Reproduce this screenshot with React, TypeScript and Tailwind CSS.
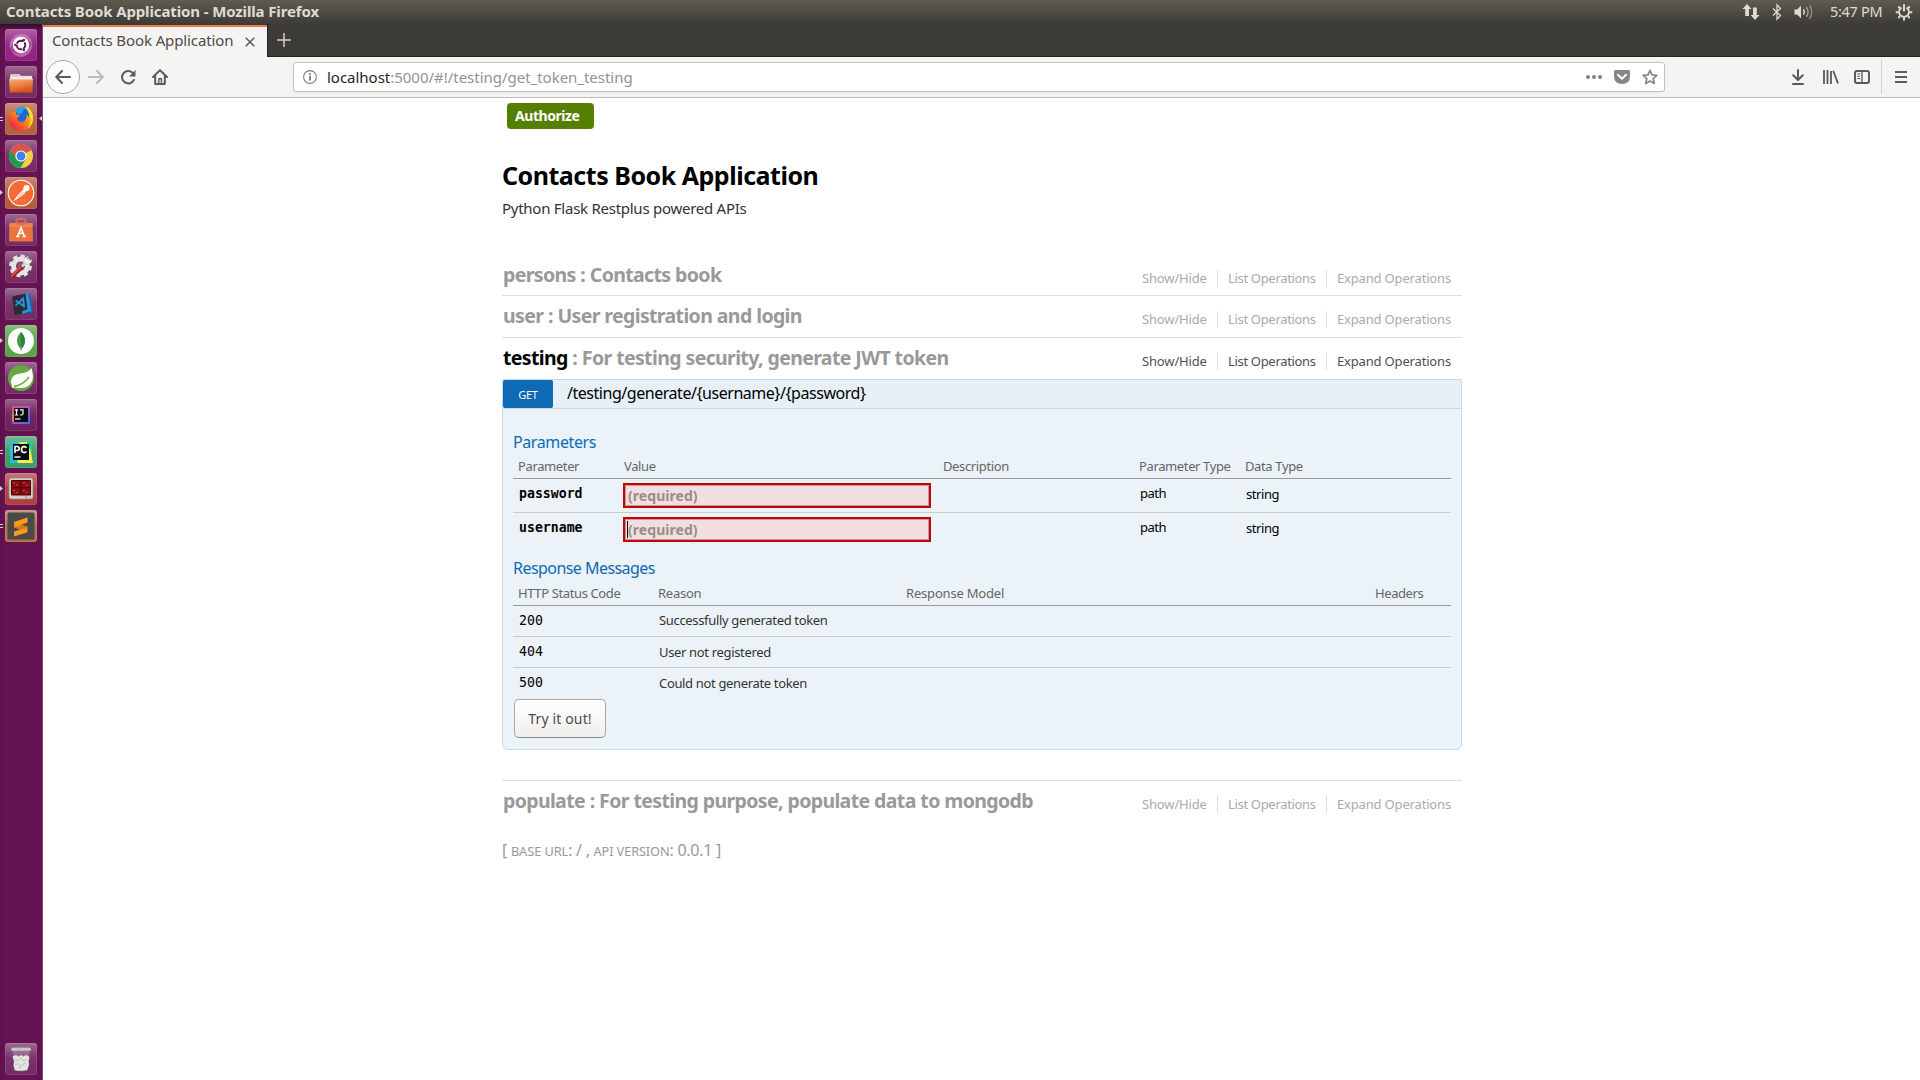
import type { ReactNode } from "react";

/* ---------- launcher ---------- */

function Svg({ children }: { children: ReactNode }) {
  return (
    <svg viewBox="0 0 32 32" className="block h-8 w-8">
      {children}
    </svg>
  );
}

const icons: Record<string, ReactNode> = {
  dash: (
    <Svg>
      <circle cx="16" cy="16" r="11.5" fill="#b565a5" opacity=".45" />
      <path d="M5 20a12 12 0 0 1 12-15c6 0 10 5 10 10-3-5-8-7-12-6-5 1-8 5-10 11z" fill="#d9a3cf" opacity=".45" />
      <path d="M27 14a12 12 0 0 1-11 14c-5 0-8-3-9-6 4 3 8 3 12 1s7-5 8-9z" fill="#d9a3cf" opacity=".35" />
      <circle cx="16" cy="16" r="8.2" fill="#fff" />
      <circle cx="16" cy="16" r="4.3" fill="none" stroke="#5c1650" strokeWidth="1.9" strokeDasharray="7.8 1.2" strokeDashoffset="3.4" />
      <circle cx="10.4" cy="16" r="1.3" fill="#5c1650" />
      <circle cx="18.8" cy="11.1" r="1.3" fill="#5c1650" />
      <circle cx="18.8" cy="20.9" r="1.3" fill="#5c1650" />
    </Svg>
  ),
  files: (
    <Svg>
      <path d="M5 9.5q0-1.500 1.500-1.500h8l1.500 1.800h10q1.200 0 1.200 1.200v4H5z" fill="#d9c6c9" />
      <path d="M5.500 10.500h21.500v5H5.500z" fill="#f3e9e6" />
      <path d="M4 13h24l-.6 13.500H4.800z" fill="url(#folder)" />
      <path d="M4 13h24l-.1 1H4z" fill="#fbb98c" />
      <defs>
        <linearGradient id="folder" x1="0" y1="0" x2="0.300" y2="1">
          <stop offset="0" stopColor="#f5b083" />
          <stop offset=".6" stopColor="#ea7a3a" />
          <stop offset="1" stopColor="#d8521a" />
        </linearGradient>
      </defs>
    </Svg>
  ),
  firefox: (
    <Svg>
      <defs>
        <linearGradient id="fx" x1=".9" y1=".1" x2=".2" y2=".9">
          <stop offset="0" stopColor="#ffe226" />
          <stop offset=".4" stopColor="#ff9a1e" />
          <stop offset="1" stopColor="#f0263e" />
        </linearGradient>
      </defs>
      <circle cx="16.500" cy="14" r="9" fill="#1b68d8" />
      <path d="M11 6.500c3-3 8-3 10.500-1-3 .5-4 2-3.500 4-2 .5-4 1.500-4.500 3z" fill="#22a5f0" />
      <path d="M5.500 7.500c.5 1 1.200 1.600 2 2C9 8.300 10.500 8 12 8.500c-1 1-1.200 2-.8 3 1.500.2 2.800.4 3.600 1.200-.8 1.300-2.600 1.500-2.800 3 .6 2.500 4 3.800 6.500 2.600 3-1.300 3.600-4 2.900-6.700 1.600.8 2.400 2 2.600 3.400.7-4-.5-8-3.500-11.500C26 5.500 28.500 11 28 16.500 27.500 23 22.500 28 16 28S4 23 4 16.500c0-3.300.4-6.300 1.500-9z" fill="url(#fx)" />
      <path d="M20.500 3.500c5 2 7.900 7 7.500 13-.3 4-2.500 7.500-5.500 9.500 2.500-4 3.300-8 2.500-12-.7-4-2.500-7-4.500-10.500z" fill="#ffdd2a" opacity=".85" />
      <path d="M12 15.700c.6 2.500 4 3.800 6.500 2.600 1-.4 1.700-1 2.200-1.800-.4 3-2.700 4.700-5.200 4.300-2.300-.4-3.700-2.500-3.500-5.100z" fill="#e8482a" opacity=".6" />
    </Svg>
  ),
  chrome: (
    <Svg>
      <circle cx="16" cy="16" r="12" fill="#f9cb4b" />
      <path d="M16 16 5.600 10A12 12 0 0 1 26.400 10z" fill="#d8564a" />
      <path d="M16 10.500H26.700A12 12 0 0 0 5.600 10L11 19z" fill="#d8564a" />
      <path d="M11.300 18.700 5.600 10A12 12 0 0 0 15.500 28l5.300-9.300z" fill="#1f9b56" />
      <circle cx="16" cy="16" r="5.600" fill="#fff" />
      <circle cx="16" cy="16" r="4.500" fill="#3f82f0" />
    </Svg>
  ),
  postman: (
    <Svg>
      <circle cx="16" cy="16" r="12.800" fill="#f8693a" stroke="#fff" strokeWidth="1.100" />
      <path d="M8 24.500 12.800 18l4.500-4.600 3 2.600-4.600 3.800z" fill="#fff" />
      <path d="M12.500 20.500 19 14.500" stroke="#f8693a" strokeWidth=".7" />
      <circle cx="21.500" cy="11" r="3.100" fill="#fff" />
      <path d="m17 14 2-2.500 2.500 2.500-2.400 2z" fill="#fff" />
    </Svg>
  ),
  software: (
    <Svg>
      <path d="M11.500 10V6.200q0-1.200 1.200-1.200h6.600q1.200 0 1.200 1.200V10" fill="none" stroke="#d96a4a" strokeWidth="1.900" />
      <path d="M4.500 9h23l.5 18.500H4z" fill="#e9753c" />
      <path d="M4.500 9h23v4h-23z" fill="#ef8456" />
      <path d="M11.500 8h9v3h-9z" fill="#d96a4a" opacity=".8" />
      <path d="M12.500 22.500 16 14l3.500 8.500M11 22.500h3.300M17.700 22.500H21M13.800 19.500h4.600" fill="none" stroke="#fff" strokeWidth="1.700" />
    </Svg>
  ),
  settings: (
    <Svg>
      <circle cx="15.500" cy="15" r="9.700" fill="none" stroke="#e2e2e2" strokeWidth="3.400" strokeDasharray="4.100 3.500" />
      <circle cx="15.500" cy="15" r="7" fill="none" stroke="#e4e4e4" strokeWidth="5" />
      <circle cx="15.500" cy="15" r="3.200" fill="#8b5a80" />
      <path d="M6.500 26 17.500 15.500" stroke="#a3232b" strokeWidth="4" strokeLinecap="round" />
      <path d="M6.500 25 16 16" stroke="#dc5a58" strokeWidth="1.200" strokeLinecap="round" />
      <path d="m17 15.500 3.500-3.500" stroke="#d4d4d4" strokeWidth="3" />
      <path d="M19 11c-.5-3 1.500-5.500 4.500-5.500L22 8l2 2 3-1.500c0 3-2.500 5-5.500 4.700z" fill="#f2f2f2" stroke="#aaa" strokeWidth=".4" />
    </Svg>
  ),
  vscode: (
    <Svg>
      <path d="m7 8.500 14-3L24 25 9.500 27z" fill="#2c2c33" />
      <path d="m20.500 5 4.500 1 3 17-4 2.800z" fill="#1668b0" />
      <path d="m20.500 5 2.500-.5 3.200 18.500-8.700 3.300-.5-3 5.500-2z" fill="#2b93e0" />
      <path d="m10.800 12.500 7.700 5.500M10.600 17.600l7.400-7.100 1.200 8.800" fill="none" stroke="#2b94e0" strokeWidth="1.900" />
    </Svg>
  ),
  mongo: (
    <Svg>
      <circle cx="16" cy="16" r="13" fill="#fff" />
      <path d="M16 7c5 5 5.500 12 0 17.500C10.500 19 11 12 16 7z" fill="#479a44" />
      <path d="M16 7c5 5 5.500 12 0 17.500z" fill="#357f3c" />
      <path d="M16 21v5" stroke="#8a9a80" strokeWidth=".8" />
    </Svg>
  ),
  spring: (
    <Svg>
      <circle cx="16" cy="16" r="13" fill="#65aa41" />
      <path d="M26.500 6c1.800 6.500 2.300 12-1.500 16.500-3.500 4-10 4-17 2.500-3-4-2.500-9.500 2-12 5.500-2.800 12.500-.5 16.500-7z" fill="#fff" />
      <path d="M8.500 24.500c6-.8 11-3.500 15.500-9.500" fill="none" stroke="#65aa41" strokeWidth="1.400" />
      <circle cx="8" cy="24.700" r="1.200" fill="#fff" />
    </Svg>
  ),
  intellij: (
    <Svg>
      <defs>
        <linearGradient id="ij" x1="0" y1="0" x2="1" y2="1">
          <stop offset="0" stopColor="#f0467e" />
          <stop offset=".5" stopColor="#a25bd0" />
          <stop offset="1" stopColor="#2a72e8" />
        </linearGradient>
      </defs>
      <path d="M7 7h18v18H7z" fill="url(#ij)" />
      <path d="M7 14h4v8H7z" fill="#e5813c" />
      <path d="M7 22h6v3H7z" fill="#a24fc4" />
      <path d="M9 9h14v14H9z" fill="#0b0b0f" />
      <path d="M9.800 10.800h3.400M11.500 10.800v5M9.800 16h3.400M15 10.800h3v4q0 1.200-1.400 1.200H15" fill="none" stroke="#fff" strokeWidth="1.200" />
      <path d="M10 20h5.500" stroke="#fff" strokeWidth="1.200" />
    </Svg>
  ),
  pycharm: (
    <Svg>
      <path d="M5 6h22v21H5z" fill="#1fcf86" />
      <path d="M14 6h8v9L14 12z" fill="#d8ec4a" />
      <path d="m5 6 9-.5L10 20l-5 2z" fill="#27c3e0" />
      <path d="m9 27 16-15 3 15z" fill="#f2ee4d" />
      <path d="M5 20h6l2 7H5z" fill="#22c3c8" />
      <path d="M8 8h16v16H8z" fill="#0b0b0f" />
      <path d="M10 17v-6.500h2.200q2 0 2 2t-2 2H10M21.500 11.800q-1-1.200-2.500-1.200-2.500 0-2.500 3t2.500 3q1.500 0 2.500-1.200" fill="none" stroke="#fff" strokeWidth="1.600" />
      <path d="M9.500 21h6" stroke="#fff" strokeWidth="1.400" />
    </Svg>
  ),
  terminator: (
    <Svg>
      <rect x="4" y="5" width="24" height="21" rx="2.500" fill="#cfcfca" stroke="#8a8a86" strokeWidth=".6" />
      <rect x="6" y="7" width="20" height="15.500" rx="1" fill="#4a0606" />
      <path d="M7 8h8.500v6H7zM16.500 8H25v6h-8.500zM7 15.200h8.500v6.300H7zM16.500 15.200H25v6.300h-8.500z" fill="#8e0b10" />
      <path d="M8 10h2M17.800 10h2M8 17.500h2M17.800 17.500h2M11 12h1.500M21 12h1.500M11 19.500h1.500M21 19.500h1.500" stroke="#e06a6a" strokeWidth=".8" />
      <circle cx="21" cy="24.200" r=".8" fill="#e04040" />
    </Svg>
  ),
  sublime: (
    <Svg>
      <rect x="2.500" y="2.500" width="27" height="27" rx="1.500" fill="#4a4a4a" />
      <path d="m9 12 13.500-4.500v5L16 14.700l6.500 2v5.500L9 26.500v-5l6.500-2L9 17.200z" fill="#f99a1c" />
      <path d="m9 17.200 6.500-2.200 7 1.700v1.500l-7 1.300z" fill="#d87a10" />
    </Svg>
  ),
  trash: (
    <Svg>
      <path d="m7.500 7 1.500 20.500q7 1.500 14 0L24.500 7z" fill="#a387a0" opacity=".6" />
      <rect x="6" y="4.500" width="20" height="3.500" rx="1.700" fill="#c8c8c4" stroke="#8d8d88" strokeWidth=".6" />
      <path d="M7.500 13.500 11 12l2.500 1.500L16 12l2 1.500 3.500-1.500 3 2-1 4 .5 4-2 5q-6 1.500-12 .2L8.500 22l.8-3.500z" fill="#e4e4e2" />
      <path d="m10 16 3 2 3-3 3 3 3-2M10 22l3-1.500 3 2.500 4-3 2 2M14 26l2-3" fill="none" stroke="#b9b9b6" strokeWidth=".8" />
    </Svg>
  ),
};

const launcher: { id: string; bg: string; left?: 1 | 2; right?: boolean }[] = [
  { id: "dash", bg: "bg-[#8f2280]" },
  { id: "files", bg: "bg-[#742b64]" },
  { id: "firefox", bg: "bg-[#b0623c]", left: 2, right: true },
  { id: "chrome", bg: "bg-[#742b64]" },
  { id: "postman", bg: "bg-[#b35a38]", left: 1 },
  { id: "software", bg: "bg-[#742b64]" },
  { id: "settings", bg: "bg-[#742b64]" },
  { id: "vscode", bg: "bg-[#742b64]" },
  { id: "mongo", bg: "bg-[#55a544]", left: 1 },
  { id: "spring", bg: "bg-[#742b64]" },
  { id: "intellij", bg: "bg-[#6c1f5b]" },
  { id: "pycharm", bg: "bg-[#3e9e68]", left: 2 },
  { id: "terminator", bg: "bg-[#b03c40]", left: 1 },
  { id: "sublime", bg: "bg-[#b0703c]", left: 2 },
];

function Tile({ id, bg, left, right }: { id: string; bg: string; left?: 1 | 2; right?: boolean }) {
  return (
    <div className="relative h-8 w-full pl-[5px]">
      <div className={`h-8 w-8 rounded-[3px] ${bg} shadow-[inset_0_0_0_1px_rgba(255,255,255,0.1)]`}>
        <div className="h-8 w-8 rounded-[3px] bg-linear-to-b from-white/30 via-white/5 via-45% to-transparent">{icons[id]}</div>
      </div>
      {left === 1 && <span className="absolute top-[13px] left-0 h-[5px] w-[3px] bg-[#d9cdd6] [clip-path:polygon(0_0,100%_50%,0_100%)]" />}
      {left === 2 && <span className="absolute top-[14px] left-0 h-1 w-[3px] border-y border-[#d9cdd6]" />}
      {right && <span className="absolute top-[13px] right-0 h-[5px] w-[3px] bg-[#d9cdd6] [clip-path:polygon(100%_0,0_50%,100%_100%)]" />}
    </div>
  );
}

function Launcher() {
  return (
    <aside className="flex w-[43px] flex-none flex-col gap-[5px] border-r border-[#84487a] bg-[#641251] pt-[5px] pb-[5px] shadow-[inset_0_6px_5px_-3px_rgba(0,0,0,0.5)]">
      {launcher.map((item) => (
        <Tile key={item.id} {...item} />
      ))}
      <div className="mt-auto">
        <Tile id="trash" bg="bg-[#742b64]" />
      </div>
    </aside>
  );
}

/* ---------- system bar and browser chrome ---------- */

function SystemBar() {
  return (
    <div className="flex h-6 items-center bg-linear-to-b from-[#5e5b50] to-[#3d3c37] pr-[7px] pl-[6px] text-[15px] text-[#dfdbd2]">
      <span className="pb-[2px] leading-[22px] font-bold tracking-[-0.123px]">Contacts Book Application - Mozilla Firefox</span>
      <svg viewBox="0 0 18 18" className="ml-auto h-[18px] w-[18px] flex-none" fill="#dfdbd2">
        <path d="M5 1 9.500 6H7v7H3.200V6H.5zM13 17l-4.500-5H11V4.500h3.800V12h2.700z" />
      </svg>
      <svg viewBox="0 0 12 18" className="ml-[11px] h-[18px] w-3 flex-none" fill="none" stroke="#dfdbd2" strokeWidth="1.300">
        <path d="m2 5.500 7.500 7L6 16.200V1.800l3.500 3.700-7.500 7" />
      </svg>
      <svg viewBox="0 0 20 18" className="ml-[11px] h-[18px] w-5 flex-none">
        <path d="M.5 6.500H3l4-3.800v12.600L3 11.500H.5z" fill="#dfdbd2" />
        <path d="M9.500 6.300q1.600 2.700 0 5.400" fill="none" stroke="#dfdbd2" strokeWidth="1.500" />
        <path d="M12.500 4.200q3 4.800 0 9.600" fill="none" stroke="#a09d95" strokeWidth="1.500" />
        <path d="M15.500 2q4.500 7 0 14" fill="none" stroke="#8a877f" strokeWidth="1.500" />
      </svg>
      <span className="ml-4 w-[52px] text-[14.500px] tracking-[-0.300px] whitespace-nowrap">5:47 PM</span>
      <svg viewBox="0 0 18 18" className="ml-[13px] h-[18px] w-[18px] flex-none" fill="none" stroke="#dfdbd2">
        <path d="M6.500 4.600a5 5 0 1 0 5 0" strokeWidth="1.800" />
        <path d="M9 1.200v7" strokeWidth="2" />
        <path d="M3.300 3.500 5 5.200M14.700 3.500 13 5.200M.7 9.200h2.500M17.300 9.200h-2.500M3.300 15l1.600-1.700M14.700 15l-1.600-1.700M9 17.500v-3" strokeWidth="2" />
      </svg>
    </div>
  );
}

function TabStrip() {
  return (
    <div className="flex h-[33px] flex-none bg-[#3c3b37]">
      <div className="mt-px flex h-8 w-[224px] items-center border-t-2 border-[#f07746] bg-[#f5f4f2] pr-3 pl-[9px]">
        <span className="pb-1 text-[15px] leading-6 tracking-[-0.110px] whitespace-nowrap text-[#4c4c4c]">Contacts Book Application</span>
        <svg viewBox="0 0 10 10" className="mb-px ml-auto h-[10px] w-[10px]" stroke="#5a5a58" strokeWidth="1.500">
          <path d="m.7.7 8.600 8.600M9.300.7.7 9.300" />
        </svg>
      </div>
      <div className="flex flex-1 items-center border-b border-l border-[#24231f] pl-[9px]">
        <svg viewBox="0 0 14 14" className="h-[14px] w-[14px]" stroke="#d5d1c8" strokeWidth="1.500">
          <path d="M7 0v14M0 7h14" />
        </svg>
      </div>
    </div>
  );
}

function Toolbar() {
  return (
    <div className="flex h-[41px] flex-none items-center border-b border-[#bdbcba] bg-[#f5f4f2] pl-[3px]">
      <div className="flex h-[34px] w-[34px] items-center justify-center rounded-full border border-[#a9a8a6] bg-[#fcfcfc]">
        <svg viewBox="0 0 16 16" className="h-4 w-4" fill="none" stroke="#5b5a59" strokeWidth="2" strokeLinecap="round" strokeLinejoin="round">
          <path d="M15 8H1.500M7 2 1.200 8 7 14" />
        </svg>
      </div>
      <svg viewBox="0 0 16 16" className="ml-2 h-4 w-4" fill="none" stroke="#bcbbb9" strokeWidth="2" strokeLinecap="round" strokeLinejoin="round">
        <path d="M1 8h13.500M9 2l5.800 6L9 14" />
      </svg>
      <svg viewBox="0 0 16 16" className="ml-4 h-4 w-4" fill="none" stroke="#5b5a59" strokeWidth="2" strokeLinecap="round">
        <path d="M13.800 11A6.200 6.200 0 1 1 12.500 3.700" />
        <path d="M15.500 1v6.500H9z" fill="#5b5a59" stroke="none" />
      </svg>
      <svg viewBox="0 0 16 16" className="ml-4 h-4 w-4" fill="none" stroke="#5b5a59" strokeWidth="2" strokeLinecap="round" strokeLinejoin="round">
        <path d="M1 8 8 1.200 15 8M3.200 7v8h9.600V7" />
        <path d="M6.800 14.500V9.800h2.600v4.700" strokeWidth="1.400" />
      </svg>

      <div className="ml-[125px] flex h-[30px] w-[1372px] items-center rounded-[3px] border border-[#c4c3c1] bg-white pr-[6px] pl-[9px] shadow-[0_1px_2px_rgba(0,0,0,0.06)]">
        <svg viewBox="0 0 14 14" className="h-[14px] w-[14px]" fill="none" stroke="#7b7b7b">
          <circle cx="7" cy="7" r="6.400" strokeWidth="1.100" />
          <path d="M7 6v4.500M7 3.300V5" strokeWidth="1.800" />
        </svg>
        <span className="ml-[10px] text-[15px] tracking-[-0.020px] whitespace-nowrap text-[#939393]">
          <span className="text-[#262626]">localhost</span>:5000/#!/testing/get_token_testing
        </span>
        <svg viewBox="0 0 16 4" className="ml-auto h-1 w-4" fill="#7f7f7f">
          <circle cx="2" cy="2" r="2" />
          <circle cx="8" cy="2" r="2" />
          <circle cx="14" cy="2" r="2" />
        </svg>
        <svg viewBox="0 0 16 14" className="ml-3 h-[14px] w-4">
          <path d="M1.500 0h13Q16 0 16 1.500V6q0 8-8 8T0 6V1.500Q0 0 1.500 0z" fill="#868686" />
          <path d="m4 4.800 4 3.900 4-3.900" fill="none" stroke="#fff" strokeWidth="2" strokeLinecap="round" strokeLinejoin="round" />
        </svg>
        <svg viewBox="0 0 16 16" className="ml-3 h-4 w-4" fill="none" stroke="#868686" strokeWidth="1.700" strokeLinejoin="round">
          <path d="m8 1.300 2 4.500 4.900.5-3.700 3.300 1.100 4.900L8 12l-4.300 2.500 1.100-4.900L1.100 6.300 6 5.800z" />
        </svg>
      </div>

      <svg viewBox="0 0 12 16" className="ml-[127px] h-4 w-3" fill="none" stroke="#5b5a59" strokeWidth="2" strokeLinecap="round" strokeLinejoin="round">
        <path d="M6 1v9.500M1.200 6.300 6 11l4.800-4.700M1 15h10" />
      </svg>
      <svg viewBox="0 0 16 14" className="ml-[19px] h-[14px] w-4" fill="none" stroke="#5b5a59" strokeWidth="1.800">
        <path d="M1 0v14M4.500 0v14M8 1v13M10.200.8 15 13.500" />
      </svg>
      <svg viewBox="0 0 16 14" className="ml-[15px] h-[14px] w-4" fill="none" stroke="#5b5a59">
        <rect x="1" y="1" width="14" height="12" rx="2" strokeWidth="2" />
        <path d="M8 1v12" strokeWidth="1.300" />
        <path d="M3.300 4h3M3.300 6.300h2.500M3.300 8.600h3" />
      </svg>
      <div className="ml-[11px] h-[34px] w-px bg-[#d3d2d0]" />
      <svg viewBox="0 0 12 12" className="ml-[13px] h-3 w-3" stroke="#5b5a59" strokeWidth="2">
        <path d="M0 1h12M0 6h12M0 11h12" />
      </svg>
    </div>
  );
}

/* ---------- documentation page ---------- */

function SectionHeader({ name, text, active = false }: { name: string; text: string; active?: boolean }) {
  return (
    <div className="flex justify-between">
      <h2 className="pl-px text-[19.500px] leading-7 font-bold tracking-[-0.640px] whitespace-nowrap text-[#999] [word-spacing:0.200px]">
        <span className={active ? "text-black" : ""}>{name}</span> : {text}
      </h2>
      <ul className={`mt-[9px] mr-[10px] flex h-[17px] text-[13px] leading-[17px] ${active ? "text-[#4f4f4f]" : "text-[#aaa]"}`}>
        <li className="w-[75px] tracking-[-0.150px]">Show/Hide</li>
        <li className="w-[109px] border-l border-[#ddd] pl-[10px] tracking-[-0.320px]">List Operations</li>
        <li className="w-[126px] border-l border-[#ddd] pl-[10px] tracking-[-0.170px]">Expand Operations</li>
      </ul>
    </div>
  );
}

function ParamRow({ name, focused = false }: { name: string; focused?: boolean }) {
  return (
    <div className="grid grid-cols-[106px_319px_196px_106px_1fr] pl-[5px] text-[13px] leading-5 text-black">
      <code className="mt-[5px] pl-px font-['DejaVu_Sans_Mono'] text-[13.200px] font-bold">{name}</code>
      <div className="mt-1 ml-[-1px] h-[25px] w-[308px] border-2 border-[#c00]">
        <div className="flex h-full items-center border border-[#a9a5a2] bg-[#f2dede] pl-px text-[14px] font-bold text-[#9a8c8b]">
          <span className={`border-l leading-[17px] tracking-[0.050px] ${focused ? "border-black" : "border-transparent"}`}>(required)</span>
        </div>
      </div>
      <span />
      <span className="mt-1 pl-px tracking-[-0.500px]">path</span>
      <span className="mt-[5px] pl-px tracking-[-0.440px]">string</span>
    </div>
  );
}

const responses = [
  { code: "200", reason: "Successfully generated token", lead: "leading-[29px]" },
  { code: "404", reason: "User not registered", lead: "leading-[31px]" },
  { code: "500", reason: "Could not generate token", lead: "leading-[31px]" },
];

function Operation() {
  return (
    <div className="h-[371px] rounded-b-md border border-[#c3d9ec] bg-[#ebf3f9]">
      <div className="flex h-[29px] border-b border-[#c3d9ec] bg-[#e7f0f7]">
        <span className="h-7 w-[50px] rounded-xs bg-[#0f6ab4] pt-[5px] text-center text-[11px] leading-5 tracking-[-0.250px] text-white">GET</span>
        <span className="pl-[14px] text-[16px] leading-[26px] tracking-[-0.465px] text-black">/testing/generate/{"{username}"}/{"{password}"}</span>
      </div>
      <div className="px-[10px]">
        <h4 className="mt-[21px] text-[16px] leading-6 tracking-[-0.400px] text-[#0f6ab4]">Parameters</h4>
        <div className="grid h-[25px] grid-cols-[106px_319px_196px_106px_1fr] border-b border-[#999] pl-[5px] text-[13px] leading-6 tracking-[-0.370px] text-[#666]">
          <span>Parameter</span>
          <span>Value</span>
          <span>Description</span>
          <span>Parameter Type</span>
          <span>Data Type</span>
        </div>
        <div className="h-[34px] border-b border-[#ccc]">
          <ParamRow name="password" />
        </div>
        <div className="h-[34px]">
          <ParamRow name="username" focused />
        </div>

        <h4 className="mt-[9px] text-[16px] leading-6 tracking-[-0.550px] text-[#0f6ab4]">Response Messages</h4>
        <div className="mt-px grid h-[25px] grid-cols-[140px_248px_469px_1fr] border-b border-[#999] pl-[5px] text-[13px] leading-6 text-[#666]">
          <span className="tracking-[-0.380px]">HTTP Status Code</span>
          <span className="tracking-[-0.240px]">Reason</span>
          <span className="tracking-[-0.190px]">Response Model</span>
          <span className="tracking-[-0.420px]">Headers</span>
        </div>
        {responses.map((r) => (
          <div key={r.code} className="grid h-[31px] grid-cols-[140px_1fr] border-b border-[#ccc] pl-[5px] text-[13px] text-[#333] last-of-type:border-transparent">
            <code className="pl-px font-['DejaVu_Sans_Mono'] text-[13.200px] leading-[29px] text-black">{r.code}</code>
            <span className={`pl-px tracking-[-0.340px] ${r.lead}`}>{r.reason}</span>
          </div>
        ))}
        <button className="ml-px block h-[39px] w-[92px] rounded-[5px] border border-[#aaa8a5] border-b-[#8d8b88] bg-linear-to-b from-white to-[#efeeec] text-[14px] tracking-[0.150px] text-[#4c4c4c]">
          Try it out!
        </button>
      </div>
    </div>
  );
}

function Page() {
  return (
    <main className="flex-1 overflow-hidden bg-white">
      <div className="ml-[459px] w-[960px]">
        <button className="mt-[5px] ml-[5px] block h-[26px] w-[87px] rounded-[4px] bg-[#547f00] pl-2 text-left text-[14px] leading-[26px] font-bold tracking-[-0.440px] text-white">
          Authorize
        </button>
        <h1 className="mt-[27px] text-[25px] leading-[38px] font-bold tracking-[-0.480px] whitespace-nowrap text-black">Contacts Book Application</h1>
        <p className="mt-[2px] text-[15px] leading-6 tracking-[-0.260px] text-[#333]">Python Flask Restplus powered APIs</p>

        <div className="mt-[41px] h-[35px] border-b border-[#ddd]">
          <SectionHeader name="persons" text="Contacts book" />
        </div>
        <div className="h-[42px] border-b border-[#ddd] pt-[6px]">
          <SectionHeader name="user" text="User registration and login" />
        </div>
        <div className="h-[41px] pt-[6px]">
          <SectionHeader name="testing" text="For testing security, generate JWT token" active />
        </div>
        <Operation />
        <div className="mt-[30px] border-t border-[#ddd] pt-[6px]">
          <SectionHeader name="populate" text="For testing purpose, populate data to mongodb" />
        </div>
        <footer className="mt-[21px] text-[16px] leading-7 tracking-[-0.280px] text-[#999]">
          [ <span className="text-[12.800px] tracking-[-0.080px]">BASE URL</span>: / , <span className="text-[12.800px] tracking-[-0.130px]">API VERSION</span>: 0.0.1 ]
        </footer>
      </div>
    </main>
  );
}

export default function App() {
  return (
    <div className="flex h-[1080px] w-[1920px] flex-col overflow-hidden bg-white font-['Noto_Sans',sans-serif]">
      <SystemBar />
      <div className="flex min-h-0 flex-1">
        <Launcher />
        <div className="flex min-w-0 flex-1 flex-col">
          <TabStrip />
          <Toolbar />
          <Page />
        </div>
      </div>
    </div>
  );
}
